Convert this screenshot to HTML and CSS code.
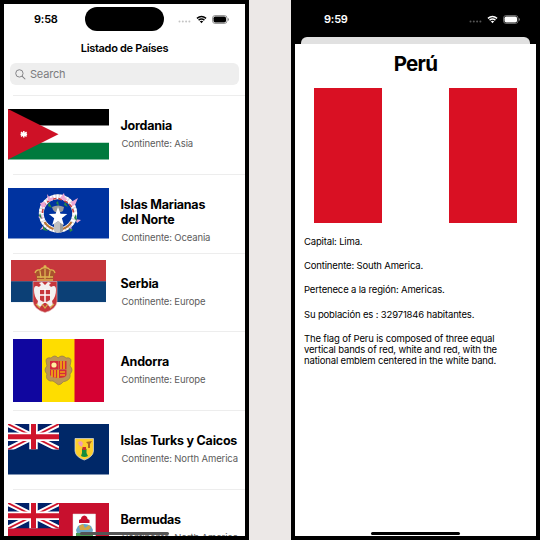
FILE: index.html
```
<!DOCTYPE html>
<html lang="es">
<head>
<meta charset="utf-8">
<title>Listado de Países</title>
<link rel="stylesheet" href="styles.css">
</head>
<body>
<svg class="defs" width="0" height="0" aria-hidden="true">
  <symbol id="wifi" viewBox="0 0 12 9"><path d="M1 3.300Q6-.8 11 3.300M2.800 5.200Q6 2.600 9.200 5.200" fill="none" stroke="currentColor" stroke-width="1.500"/><path d="M4.100 6.500Q6 5.100 7.900 6.500L6 8.500Z" fill="currentColor"/></symbol>
  <symbol id="battery" viewBox="0 0 17 9"><rect x=".5" y=".5" width="14.500" height="8" rx="2.600" fill="none" stroke="currentColor" stroke-opacity=".4"/><rect x="1.500" y="1.500" width="12.500" height="6" rx="1.700" fill="currentColor"/><path d="M15.900 3v3q1-.3 1-1.500t-1-1.500" fill="currentColor" opacity=".5"/></symbol>
  <symbol id="dots" viewBox="0 0 13 3"><g fill="currentColor"><circle cx="1.500" cy="1.500" r="1"/><circle cx="4.800" cy="1.500" r="1"/><circle cx="8.100" cy="1.500" r="1"/><circle cx="11.400" cy="1.500" r="1"/></g></symbol>
  <symbol id="union" viewBox="0 0 51 25.500"><path fill="#012169" d="M0 0h51v25.500H0z"/><path d="M0 0l51 25.500M51 0L0 25.500" stroke="#fff" stroke-width="5.600"/><path d="M0 0l51 25.500M51 0L0 25.500" stroke="#cf142b" stroke-width="1.800"/><path d="M25.500 0v25.500M0 12.750h51" stroke="#fff" stroke-width="8.500"/><path d="M25.500 0v25.500M0 12.750h51" stroke="#cf142b" stroke-width="5"/></symbol>
</svg>
<main class="stage">
  <section class="phone phone-list">
    <header class="status">
      <span class="clock">9:58</span>
      <span class="island"></span>
      <span class="signals"><svg class="dots"><use href="#dots"/></svg><svg class="wifi"><use href="#wifi"/></svg><svg class="battery"><use href="#battery"/></svg></span>
    </header>
    <h1 class="nav-title">Listado de Países</h1>
    <div class="search"><svg class="lens" viewBox="0 0 12 12"><circle cx="4.800" cy="4.800" r="4" fill="none" stroke="currentColor"/><path d="M7.700 7.700l3.500 3.500" stroke="currentColor" stroke-width="1.100"/></svg><span>Search</span></div>
    <ul class="countries">
      <li class="row">
        <svg class="flag" viewBox="0 0 101.500 50.500"><path d="M0 0h101.500v17H0z"/><path fill="#fff" d="M0 16.500h101.500v17.500H0z"/><path fill="#007a3d" d="M0 33.800h101.500v16.700H0z"/><path fill="#ce1126" d="M0 0l50.500 25.250L0 50.500z"/><path d="M15.800 22v6.600M13 23.200l5.600 4.200M18.600 23.200L13 27.400M12.500 25.300h6.600" stroke="#fff" stroke-width="1.500"/></svg>
        <div class="info"><h2>Jordania</h2><p>Continente: Asia</p></div>
      </li>
      <li class="row">
        <svg class="flag" viewBox="0 0 101.500 50.500"><path fill="#0033a0" d="M0 0h101.500v50.500H0z"/>
          <circle cx="50" cy="25.500" r="16.700" fill="none" stroke="#d9d6dc" stroke-width="5"/>
          <circle cx="50" cy="25.500" r="16.700" fill="none" stroke="#fff" stroke-width="4.500" stroke-dasharray="2 1.200"/>
          <path d="M34.500 25q0-8 7-12.500 7-4 14 0 9 4 10 12" fill="none" stroke="#c94343" stroke-width="1.600" stroke-dasharray="4 2"/>
          <path d="M36.500 34q3 5 9 7M63.500 34q-3 5-9 7" fill="none" stroke="#b87535" stroke-width="2.200"/>
          <g fill="#eea7d4"><path d="M39 6l3 4 4-1-2 4-4 0zM52 10l4-5 1 5 3 1-4 2zM63 14l7-4-3 7-3 1zM32 15l5-1 1 4-4 2zM30 29l4-2 1 4zM67 31l6 1-4 3zM35 38l-3 4 5-2zM61 39l3 4-1-5z"/></g>
          <g fill="#278b42"><path d="M41 14l3 6-4-2zM50 13l1 5-3-3zM57 14l3 5-4-2zM32 25l2 6-3-3zM68 26l1 7-3-3zM35 38l5 5-5-1zM61 40l4 2-3 2z"/></g>
          <path d="M44 19q6-3 12 0l-1 4-2 1h-6l-2-2zM46 35h9v8q-4 3-9 0z" fill="#9b9b9b"/>
          <path fill="#fff" d="M50 19l2.500 6.800 6.800.2-5.400 4.200 2 6.800L50 33.500l-5.800 3.500 2-6.800-5.400-4.200 6.800-.2z"/><path d="M46 36l4-3 2 1v10q-3 1-6-1z" fill="#c1c1c1"/></svg>
        <div class="info"><h2>Islas Marianas<br>del Norte</h2><p>Continente: Oceania</p></div>
      </li>
      <li class="row">
        <svg class="flag flag-serbia" viewBox="0 0 95 63"><path fill="#c6363c" d="M0 0h95v21.500H0z"/><path fill="#0c4076" d="M0 21.200h95v21.100H0z"/><path fill="#fff" d="M0 42.300h95V63H0z"/>
          <path d="M22 21.500h24v20q-1 8-12 11-11-3-12-11z" fill="#c6363c" stroke="#e5b8b8" stroke-width=".6"/>
          <path d="M34 25l-3-3-3 1 2 2-2 2q-5-3-5 3 0 7 4 11l-1 4 3 2 4-4h2l4 4 3-2-1-4q4-4 4-11 0-6-5-3l-2-2 2-2-3-1z" fill="#f4f1f1"/>
          <path d="M29 30h10v10q-5 4-10 0z" fill="#c6363c"/><path d="M34 29v13M28.500 35h11" stroke="#fff" stroke-width="1.500"/><path d="M31 44l3 4 3-4M25 44l4 4M43 44l-4 4" fill="none" stroke="#d4ad4c" stroke-width="1.200"/>
          <path d="M26 20l-2-7q1-4 5-3 2-3 5-2 3-1 5 2 4-1 5 3l-2 7z" fill="#a9522e"/><path d="M26 20h16M24 13q1-4 5-3 2-3 5-2 3-1 5 2 4-1 5 3M26 17h16M29 11l1 7M34 9v10M39 11l-1 7M34 5v3M32.500 6.500h3" fill="none" stroke="#deb552" stroke-width="1.300"/></svg>
        <div class="info"><h2>Serbia</h2><p>Continente: Europe</p></div>
      </li>
      <li class="row">
        <svg class="flag flag-andorra" viewBox="0 0 91 63"><path fill="#10069f" d="M0 0h29.500v63H0z"/><path fill="#fedd00" d="M29 0h33v63H29z"/><path fill="#d50032" d="M61.500 0H91v63H61.500z"/>
          <path d="M33 22q0-4 5-3 4-4 7 0 4-4 8 0 5-1 5 3l-1 5q4 4 0 8 1 5-4 7-3 0-5 3-3 2-5-1-3-3-6-2-5-2-3-7-4-4 0-8z" fill="#bd9554" stroke="#8f7a49" stroke-width=".7"/>
          <path fill="#d52b3b" d="M37 22h8.500v8H37zM46 22h7.500v8H46zM37 30.500h8.500V39q-7 0-8.500-3zM46 30.500h7.500V36q-1 3-7.500 3z"/>
          <path d="M48 22v8M51 22v8M39 31v7M42 31v7.500M45 31v8M47 33h5M47 36h5" stroke="#fedd00" stroke-width="1.200"/><circle cx="41" cy="26" r="2.600" fill="#fff2a0"/></svg>
        <div class="info"><h2>Andorra</h2><p>Continente: Europe</p></div>
      </li>
      <li class="row">
        <svg class="flag" viewBox="0 0 101.500 50.500"><path fill="#002868" d="M0 0h101.500v50.500H0z"/><use href="#union" width="51" height="25.500"/>
          <path d="M67 14.500h18.500V27q-.5 6-9.200 9-8.800-3-9.300-9z" fill="#fdce2c" stroke="#d8dce8" stroke-width=".7"/><path d="M70 18l3-1 2 2-1 4-3-2z" fill="#f39bb0"/><path d="M78 18l6-1-2 3v4h-2v-4z" fill="#a96724"/><path d="M74 25q2.300-3 4.500 0v4l1.500 3q-3.500 2-7 0l1-3z" fill="#168c3c"/><path d="M74.500 23h3.500v3h-3.500z" fill="#c72c30"/></svg>
        <div class="info"><h2>Islas Turks y Caicos</h2><p>Continente: North America</p></div>
      </li>
      <li class="row">
        <svg class="flag" viewBox="0 0 101.500 50.500"><path fill="#c8102e" d="M0 0h101.500v50.500H0z"/><use href="#union" width="51" height="25.500"/>
          <path d="M65 11h22.500v22q-1 5-11.200 8Q66 38 65 33z" fill="#fff" stroke="#ddd" stroke-width=".5"/><path d="M73 16q0-3 3.300-3.500 3.200.5 3.200 3.500l2 1v3H71v-3z" fill="#c8102e"/><path d="M70 23q6-4 13 0l2 4-2 7H70l-2-7z" fill="#69a8c8"/><path d="M71 23l4-2 2 4 4-3 2 3-3 2h-8z" fill="#d3a746"/><path d="M68 30h17v4H68z" fill="#4b9b52"/></svg>
        <div class="info"><h2>Bermudas</h2><p>Continente: North America</p></div>
      </li>
    </ul>
    <span class="home home-soft"></span>
  </section>
  <section class="phone phone-detail">
    <header class="status">
      <span class="clock">9:59</span>
      <span class="signals"><svg class="dots"><use href="#dots"/></svg><svg class="wifi"><use href="#wifi"/></svg><svg class="battery"><use href="#battery"/></svg></span>
    </header>
    <div class="sheet-behind"></div>
    <article class="sheet">
      <h1 class="country">Perú</h1>
      <div class="peru"><span></span><span></span><span></span></div>
      <div class="facts">
        <p>Capital: Lima.</p>
        <p>Continente: South America.</p>
        <p>Pertenece a la región: Americas.</p>
        <p>Su población es : 32971846 habitantes.</p>
        <p>The flag of Peru is composed of three equal<br>vertical bands of red, white and red, with the<br>national emblem centered in the white band.</p>
      </div>
    </article>
    <span class="home"></span>
  </section>
</main>
</body>
</html>
```
FILE: styles.css
```
* { box-sizing: border-box; margin: 0; padding: 0; }
body { width: 540px; height: 540px; overflow: hidden; background: #ece8e7; font-family: Inter, "Liberation Sans", sans-serif; color: #000; }
.defs { position: absolute; }
svg { display: block; flex: none; }
.stage { display: flex; justify-content: space-between; height: 540px; }
.phone { position: relative; width: 249px; height: 540px; border: 4px solid #000; overflow: hidden; display: flex; flex-direction: column; background: #fff; }
.status { display: flex; flex: none; height: 34px; padding: 0 16px 0 30px; }
.clock { width: 51px; font-size: 11px; line-height: 14px; font-weight: 600; margin-top: 8px; letter-spacing: -.2px; }
.island { width: 79px; height: 24px; margin-top: 3px; border-radius: 12px; background: #000; }
.signals { display: flex; align-items: center; height: 10px; margin: 10px 0 0 auto; }
.dots { width: 13px; height: 3px; margin: 5px 5px 0 0; color: #c4c4c4; }
.wifi { width: 11px; height: 9px; margin-right: 5px; }
.battery { width: 17px; height: 9px; }
.nav-title { flex: none; height: 25px; padding-top: 3px; font-size: 11px; line-height: 14px; font-weight: 600; letter-spacing: -.3px; text-align: center; }
.search { flex: none; display: flex; align-items: center; height: 22px; margin: 0 6px; padding-left: 5px; border-radius: 6px; background: #eee; color: #7c7c7f; font-size: 11px; letter-spacing: -.2px; }
.lens { width: 11px; height: 11px; margin-right: 4px; }
.countries { list-style: none; margin-top: 10px; }
.row { display: grid; grid-template-columns: 109px 1fr; height: 78.800px; padding-left: 3.500px; background: linear-gradient(#ededed, #ededed) 9px 0 / 100% 1px no-repeat; }
.flag { width: 101.500px; height: 50.500px; margin-top: 14.300px; }
.flag-serbia { width: 95px; height: 63px; margin: 7.700px 0 0 3.500px; }
.flag-andorra { width: 91px; height: 63px; margin: 7.700px 0 0 5.500px; }
.info { padding: 23px 0 0 4px; }
.info h2 { font-size: 12.500px; line-height: 15px; font-weight: 700; letter-spacing: -.23px; white-space: nowrap; }
.info p { margin: 4px 0 0 1px; font-size: 9.500px; line-height: 13px; letter-spacing: -.13px; color: #5c5c5c; white-space: nowrap; }
.home { position: absolute; left: 76px; bottom: 1px; width: 89px; height: 3px; border-radius: 2px; background: #000; }
.home-soft { background: #555; }
.phone-detail { background: #000; }
.phone-detail .status { color: #fff; padding-left: 29px; }
.phone-detail .dots { color: #555; }
.sheet-behind { flex: none; height: 7px; margin: -1px 6px 0; border-radius: 6px 6px 0 0; background: #e1e1e1; }
.sheet { flex: 1; background: #fff; }
.country { height: 44px; padding-top: 7px; font-size: 20.500px; line-height: 25px; font-weight: 700; text-align: center; letter-spacing: -.7px; }
.peru { display: grid; grid-template-columns: repeat(3, 1fr); width: 203px; height: 135px; margin: 0 auto; background: #fff; }
.peru span { background: #d91023; }
.peru span:nth-child(2) { background: #fff; }
.facts { display: flex; flex-direction: column; gap: 13px; padding: 13px 9px; font-size: 9.500px; line-height: 11.200px; letter-spacing: -.16px; }
.facts p { white-space: nowrap; }
```
